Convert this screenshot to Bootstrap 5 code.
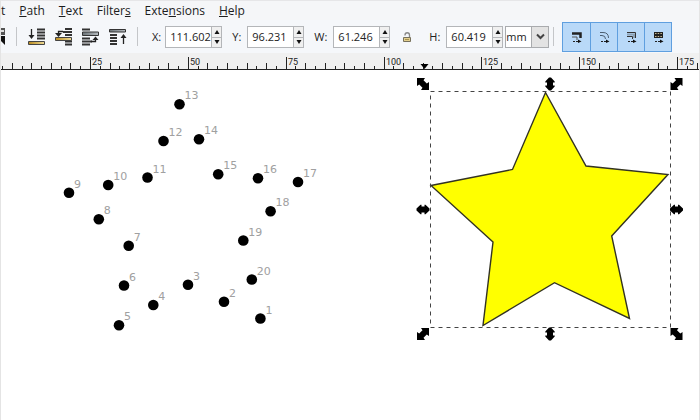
<!DOCTYPE html>
<html lang="en">
<head>
<meta charset="utf-8">
<meta name="viewport" content="width=device-width, initial-scale=1">
<title>Vector drawing editor</title>
<link href="https://cdn.jsdelivr.net/npm/bootstrap@5.3.0/dist/css/bootstrap.min.css" rel="stylesheet">
<style>
body{font-family:"Open Sans","Noto Sans",sans-serif;font-size:12px;line-height:16px;color:#222;background:#fff;overflow:hidden}
.app-window{border-left:1px solid #e4e4e4;border-right:1px solid #e4e4e4}
.menu-bar{background:#f5f6f8;height:20px;gap:14px;border-top:1px solid #e6e6e8}
.menu-bar a{color:#1c1c1c}
.tool-bar{background:#f5f7fa;height:33px;font-size:11px;gap:10px}
.tool-bar svg,.ruler svg{display:block}
.vsep{width:1px;height:19px;background:#c4c6c9}
.icon-btn{width:19px;height:19px;border:0;padding:0;background:none}
.cut-btn{width:5px;overflow:hidden}
.num-box{width:47px;height:22px;border:1px solid #b4b6b9;padding:0 0 0 4px;background:#fff;color:#222;border-radius:0;outline:0}
.spin{width:10px;height:22px;border:1px solid #b4b6b9;border-left:0;background:#f0f0f0}
.spin button{border:0;padding:0;height:10px;background:none;display:flex;align-items:center;justify-content:center}
.spin button+button{border-top:1px solid #b4b6b9}
.unit-box{width:44px;height:22px;margin-left:2px}
.unit-box select{appearance:none;border:1px solid #a9abae;background:#fff;padding:0;border-radius:0;color:#222}
.unit-arrow{right:0;top:0;width:18px;height:22px;background:#e3e3e3;border:1px solid #a9abae;pointer-events:none}
.snap-set{background:#b9d9f8;border:1px solid #5f9fdf;height:30px}
.snap-set button{width:27px;border:0;border-left:1px solid #5f9fdf;background:none;padding:0}
.snap-set button:first-child{border-left:0}
.ruler{background:#f0f0f0;height:17px;overflow:hidden}
.ruler text{font:9px Roboto,sans-serif;fill:#222}
.art text{font:11px "DejaVu Sans",sans-serif;fill:#a0a0a0}
.gap-lbl{gap:6px}
</style>
<script src="https://cdn.jsdelivr.net/npm/bootstrap@5.3.0/dist/js/bootstrap.bundle.min.js"></script>
</head>
<body>
<svg width="0" height="0" class="position-absolute" aria-hidden="true">
  <defs>
    <linearGradient id="gold"><stop offset="0" stop-color="#b98a1c"/><stop offset="1" stop-color="#eedb96"/></linearGradient>
    <linearGradient id="steel"><stop offset="0" stop-color="#6d7478"/><stop offset="1" stop-color="#b6bcc0"/></linearGradient>
    <symbol id="spin-up" viewBox="0 0 6 4"><path d="M3 0 5.500 4H.5Z" fill="#111"/></symbol>
    <symbol id="spin-dn" viewBox="0 0 6 4"><path d="M3 4 5.500 0H.5Z" fill="#111"/></symbol>
    <path id="arrow-v" d="M-1-6.500H1L4.700-2.500V-1.500H3V1.500H4.700V2.500L1 6.500H-1L-4.700 2.500V1.500H-3V-1.500H-4.700V-2.500Z"/>
    <path id="arrow-d" d="M-6-6H2L.5-3.800 3.800-.5 6-2V6H-2L-.5 3.800-3.800 .5-6 2Z"/>
  </defs>
</svg>
<div class="app-window d-flex flex-column vh-100">
  <nav class="menu-bar d-flex align-items-center flex-shrink-0" aria-label="Main menu">
    <a href="#" class="text-decoration-none">t</a>
    <a href="#" class="text-decoration-none"><u>P</u>ath</a>
    <a href="#" class="text-decoration-none"><u>T</u>ext</a>
    <a href="#" class="text-decoration-none">Filter<u>s</u></a>
    <a href="#" class="text-decoration-none">Exte<u>n</u>sions</a>
    <a href="#" class="text-decoration-none"><u>H</u>elp</a>
  </nav>

  <div class="tool-bar d-flex align-items-center flex-shrink-0" role="toolbar" aria-label="Select tool">
    <button class="icon-btn cut-btn" aria-label="Flip vertical"><svg width="4" height="19"><path d="M0 1H4V8H0Z" fill="#555"/><path d="M0 3H3V5H0Z" fill="#ddd"/><path d="M0 9H4V18L0 14Z" fill="#111"/></svg></button>
    <div class="vsep flex-shrink-0"></div>
    <div class="d-flex gap-2">
      <button class="icon-btn" aria-label="Lower to bottom"><svg width="19" height="19"><path d="M10 2.500H18M10 5.500H18M10 8.500H18M10 11.500H18" stroke="#333" stroke-width="2"/><path d="M4.500 2V10" stroke="#222" stroke-width="1.300"/><path d="M1.500 8H7.500L4.500 12Z" fill="#222"/><path d="M1.500 14.500H17.500V17.500H1.500Z" fill="url(#gold)" stroke="#444"/></svg></button>
      <button class="icon-btn" aria-label="Lower"><svg width="19" height="19"><path d="M11 2H18M9 5H18M11 8H18M11 14.500H18M11 17.500H18" stroke="#333" stroke-width="2"/><path d="M9 4.500H4.500V7" stroke="#222" fill="none" stroke-width="1.300"/><path d="M1 6H8L4.500 10Z" fill="#222"/><path d="M1.500 10.500H17.500V13.500H1.500Z" fill="url(#gold)" stroke="#444"/></svg></button>
      <button class="icon-btn" aria-label="Raise"><svg width="19" height="19"><path d="M1 2.500H9M1 11.500H9M1 14.500H11M1 17.500H9" stroke="#333" stroke-width="2"/><path d="M1.500 5H17.500V8.500H1.500Z" fill="url(#steel)" stroke="#333"/><path d="M10 14.500H14.500V12" stroke="#222" fill="none" stroke-width="1.300"/><path d="M11.500 13H17.500L14.500 9.500Z" fill="#222"/></svg></button>
      <button class="icon-btn" aria-label="Raise to top"><svg width="19" height="19"><path d="M2 8H9M2 11H9M2 14H9M2 17H9" stroke="#333" stroke-width="2"/><path d="M1.500 2.500H17.500V5H1.500Z" fill="url(#steel)" stroke="#333"/><path d="M15.500 17V9" stroke="#222" stroke-width="1.300"/><path d="M12.500 11H18.500L15.500 7Z" fill="#222"/></svg></button>
    </div>
    <div class="vsep flex-shrink-0"></div>
    <div class="d-flex align-items-center gap-1 ms-1">
      <label for="fx">X:</label>
      <div class="d-flex"><input id="fx" class="num-box" value="111.602"><div class="spin d-flex flex-column"><button aria-label="Increase X"><svg width="6" height="4"><use href="#spin-up"/></svg></button><button aria-label="Decrease X"><svg width="6" height="4"><use href="#spin-dn"/></svg></button></div></div>
    </div>
    <div class="d-flex align-items-center gap-lbl">
      <label for="fy">Y:</label>
      <div class="d-flex"><input id="fy" class="num-box" value="96.231"><div class="spin d-flex flex-column"><button aria-label="Increase Y"><svg width="6" height="4"><use href="#spin-up"/></svg></button><button aria-label="Decrease Y"><svg width="6" height="4"><use href="#spin-dn"/></svg></button></div></div>
    </div>
    <div class="d-flex align-items-center gap-lbl">
      <label for="fw">W:</label>
      <div class="d-flex"><input id="fw" class="num-box" value="61.246"><div class="spin d-flex flex-column"><button aria-label="Increase width"><svg width="6" height="4"><use href="#spin-up"/></svg></button><button aria-label="Decrease width"><svg width="6" height="4"><use href="#spin-dn"/></svg></button></div></div>
    </div>
    <button class="icon-btn" aria-label="Lock ratio"><svg width="19" height="19"><path d="M5 8.500V8A2.200 2.200 0 0 1 9.500 8V10" fill="none" stroke="#888" stroke-width="1.300"/><path d="M3.500 10.500H10.500V14.500H3.500Z" fill="#e3cf8d" stroke="#77715c"/><path d="M5 12.500H9" stroke="#a8924f"/></svg></button>
    <div class="d-flex align-items-center">
      <div class="d-flex align-items-center gap-lbl">
        <label for="fh">H:</label>
        <div class="d-flex"><input id="fh" class="num-box" value="60.419"><div class="spin d-flex flex-column"><button aria-label="Increase height"><svg width="6" height="4"><use href="#spin-up"/></svg></button><button aria-label="Decrease height"><svg width="6" height="4"><use href="#spin-dn"/></svg></button></div></div>
      </div>
      <div class="unit-box position-relative flex-shrink-0">
        <select class="w-100 h-100" aria-label="Unit"><option>mm</option><option>px</option></select>
        <span class="unit-arrow position-absolute d-flex align-items-center justify-content-center"><svg width="9" height="7"><path d="M1 1.500 4.500 5 8 1.500" fill="none" stroke="#444" stroke-width="2"/></svg></span>
      </div>
      <div class="vsep ms-1 me-2 flex-shrink-0"></div>
      <div class="snap-set d-flex flex-shrink-0">
        <button aria-label="Scale stroke width"><svg class="mx-auto" width="11" height="12"><path d="M1 2.500H9.500V7" fill="none" stroke="#222" stroke-width="2.500"/><path d="M1 6H6V9" fill="none" stroke="#555"/><path d="M2 10.500H8" stroke="#222" stroke-dasharray="2 1"/><path d="M7 8.500 10.500 10.500 7 12Z" fill="#111"/></svg></button>
        <button aria-label="Scale corners"><svg class="mx-auto" width="11" height="12"><path d="M1 1.500H4Q9.500 1.500 9.500 7M1 4.500H3Q6.500 4.500 6.500 8" fill="none" stroke="#4c5e70"/><path d="M2 10.500H8" stroke="#222" stroke-dasharray="2 1"/><path d="M7 8.500 10.500 10.500 7 12Z" fill="#111"/></svg></button>
        <button aria-label="Move gradients"><svg class="mx-auto" width="11" height="12"><path d="M1 1.500H9.500V7M1 5.500H6.500V8" fill="none" stroke="#333"/><path d="M1 3.500H8V7" fill="none" stroke="#8ba1b5" stroke-width="2"/><path d="M2 10.500H8" stroke="#222" stroke-dasharray="2 1"/><path d="M7 8.500 10.500 10.500 7 12Z" fill="#111"/></svg></button>
        <button aria-label="Move patterns"><svg class="mx-auto" width="11" height="12"><path d="M1 1H10V7H1Z" fill="#222"/><path d="M2 2.500H9M2 5.500H9" stroke="#c7ba93" stroke-dasharray="1.500 1.200"/><path d="M2 10.500H8" stroke="#222" stroke-dasharray="2 1"/><path d="M7 8.500 10.500 10.500 7 12Z" fill="#111"/></svg></button>
      </div>
    </div>
  </div>

  <div class="ruler flex-shrink-0"><svg id="ruler" width="100%" height="17" role="img" aria-label="Ruler in millimetres"></svg></div>

  <main class="flex-grow-1 overflow-hidden">
    <svg class="art d-block" width="100%" height="100%">
      <g transform="translate(-1 -70)">
        <g id="dots"></g>
        <path d="M545.500 92.500 586 166 668 174.500 611.700 236 629.500 318.500 554.500 282.700 483 325.500 493 242 431 185.500 512.500 169.500Z" fill="#ff0" stroke="#333322" stroke-width="1.400"/>
        <rect x="430.500" y="91.500" width="240" height="236" fill="none" stroke="#444" stroke-dasharray="4 4"/>
        <g fill="#000">
          <use href="#arrow-d" x="423" y="84"/>
          <use href="#arrow-v" x="550" y="84"/>
          <use href="#arrow-d" transform="translate(676.500 84) scale(-1 1)"/>
          <use href="#arrow-v" transform="translate(423 209.500) rotate(90)"/>
          <use href="#arrow-v" transform="translate(676.500 209.500) rotate(90)"/>
          <use href="#arrow-d" transform="translate(423 334) scale(-1 1)"/>
          <use href="#arrow-v" x="550" y="334"/>
          <use href="#arrow-d" x="676.500" y="334"/>
        </g>
      </g>
    </svg>
  </main>
</div>
<script>
// Ruler: a labelled tick every 25 mm, ten subdivisions between
const step = 97.85, start = 89, ruler = document.getElementById('ruler');
function drawRuler() {
  const width = ruler.clientWidth;
  let r = '';
  for (let i = -9; start + i * step / 10 < width; i++) {
    const x = Math.round(start + i * step / 10) + .5;
    const major = i % 10 === 0;
    const h = major ? 12 : i % 2 === 0 ? 6 : 3;
    r += `<path d="M${x} ${16 - h}V16" stroke="#222"/>`;
    if (major && x + 16 < width) r += `<text x="${x + 1.5}" y="12">${(i / 10 + 1) * 25}</text>`;
  }
  r += `<path d="M0 16.500H${width}" stroke="#222"/><path d="M419.500 11H427.500L423.500 16Z"/>`;
  ruler.innerHTML = r;
}
drawRuler();
addEventListener('resize', drawRuler);

// Numbered points, in order
const pts = [[260.4,318.5],[224,301.7],[188,284.7],[153.3,305],[119,325.3],[124,285.5],[128.7,245.7],[98.8,219.3],[69,192.7],[108.2,185],
  [147.5,177.5],[163.5,141],[179.5,104.3],[199,139.3],[218.2,174.3],[258,178.3],[298,182],[270.6,211.3],[243.3,240.5],[251.8,279.5]];
document.getElementById('dots').innerHTML = pts.map(([x, y], i) =>
  `<circle cx="${x}" cy="${y}" r="5.300"/><text x="${x + 5}" y="${y - 5}">${i + 1}</text>`).join('');
</script>
</body>
</html>
